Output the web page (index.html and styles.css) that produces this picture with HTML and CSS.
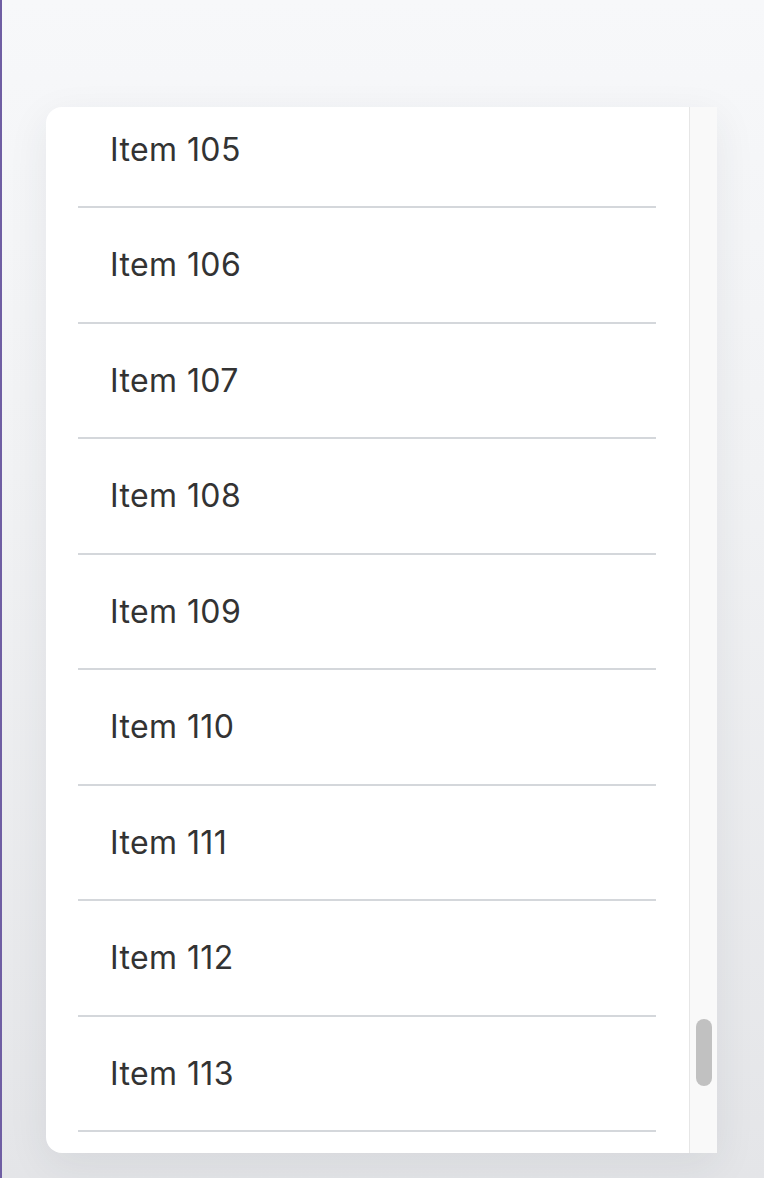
FILE: index.html
```html
<!DOCTYPE html>
<html>
<head>
<meta charset="utf-8">
<link rel="stylesheet" href="styles.css">
</head>
<body>
<div class="page">
  <div class="card">
    <div class="list">
      <div class="list-inner">
        <div class="row"><span class="label">Item 105</span></div>
        <div class="row"><span class="label">Item 106</span></div>
        <div class="row"><span class="label">Item 107</span></div>
        <div class="row"><span class="label">Item 108</span></div>
        <div class="row"><span class="label">Item 109</span></div>
        <div class="row"><span class="label">Item 110</span></div>
        <div class="row"><span class="label">Item 111</span></div>
        <div class="row"><span class="label">Item 112</span></div>
        <div class="row"><span class="label">Item 113</span></div>
      </div>
    </div>
    <div class="scrollbar"><div class="thumb"></div></div>
  </div>
</div>
</body>
</html>
```

FILE: styles.css
```css
html, body {
  margin: 0;
  padding: 0;
}
body {
  width: 764px;
  height: 1178px;
  overflow: hidden;
  background: linear-gradient(180deg, #f7f8fa 0%, #f1f2f4 40%, #e4e5e8 100%);
  font-family: Inter, "Open Sans", sans-serif;
}
.page {
  box-sizing: border-box;
  height: 1178px;
  border-left: 2px solid #6f5ea3;
  padding: 107px 0 0 44px;
  display: flex;
  align-items: flex-start;
}
.card {
  width: 671px;
  height: 1046px;
  display: flex;
  background: #ffffff;
  border-radius: 16px 0 0 16px;
  box-shadow: 0 12px 40px rgba(40, 45, 60, 0.08);
  overflow: hidden;
}
.list {
  flex: 1;
  overflow: hidden;
  padding: 0 33px 0 32px;
}
.list-inner {
  margin-top: -14.5px;
}
.row {
  box-sizing: border-box;
  height: 115.5px;
  border-bottom: 2px solid #d4d7db;
  display: flex;
  align-items: center;
  padding-left: 32px;
}
.label {
  font-size: 32px;
  color: #333333;
  letter-spacing: 0.4px;
}
.scrollbar {
  box-sizing: border-box;
  width: 28px;
  height: 100%;
  background: #f9f9f9;
  border-left: 1px solid #e6e6e6;
  padding: 912px 0 0 6px;
}
.thumb {
  width: 16px;
  height: 67px;
  border-radius: 8px;
  background: #c1c1c1;
}
```
